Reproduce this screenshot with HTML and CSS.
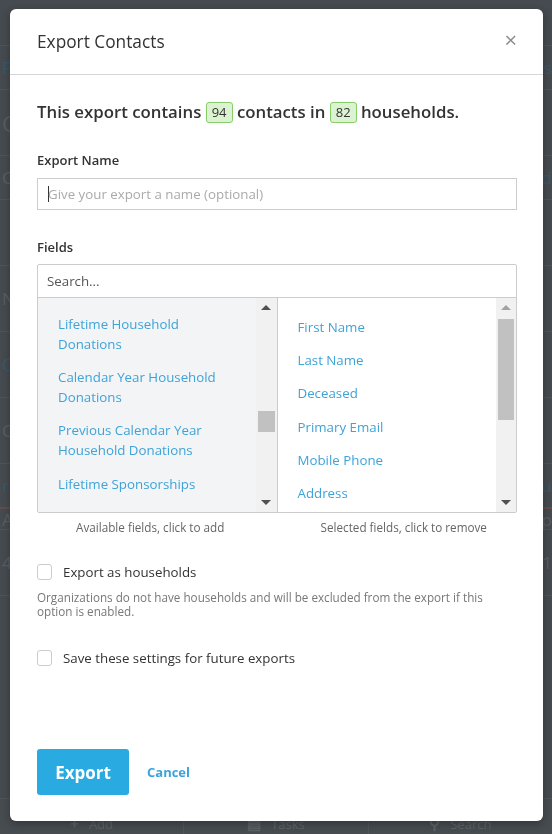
FILE: index.html
```html
<!DOCTYPE html>
<html lang="en">
	<head>
		<meta charset="UTF-8" />
		<meta name="viewport" content="width=device-width, initial-scale=1.0" />
		<title>Contacts</title>
		<link rel="stylesheet" href="styles.css">
	</head>
	<body>
		<!-- page underneath the modal -->
		<div class="page">
			<div class="page-top"></div>
			<div class="page-row"><span class="page-link">Filter contacts</span><span class="page-link right">Saved lists</span></div>
			<div class="page-row tall"><span class="page-title">Contacts</span></div>
			<div class="page-row"><span class="page-text">Contact</span><span class="page-link right">Updated</span></div>
			<div class="page-row tall"></div>
			<div class="page-row tall"><span class="page-text">Name</span></div>
			<div class="page-row tall"><span class="page-link">Organization</span></div>
			<div class="page-row tall"><span class="page-text">CSV</span></div>
			<div class="page-row"><span class="page-link">re</span><span class="page-link right">You</span></div>
			<div class="page-row warn"><span class="page-text">Add D</span><span class="page-text right">Map</span></div>
			<div class="page-row tall"><span class="page-text">404-</span><span class="page-text right">na 31</span></div>
			<div class="page-nav">
				<div class="nav-item"><span class="nav-icon">+</span>Add</div>
				<div class="nav-item"><span class="nav-icon">&#9636;</span>Tasks</div>
				<div class="nav-item"><span class="nav-icon">&#9906;</span>Search</div>
			</div>
		</div>

		<div class="backdrop">
			<div class="modal">
				<div class="modal-header">
					<h4 class="modal-title">Export Contacts</h4>
					<span class="modal-close">&times;</span>
				</div>
				<div class="modal-body">
					<p class="summary">This export contains <span class="badge">94</span> contacts in <span class="badge">82</span> households.</p>

					<label class="field-label">Export Name</label>
					<div class="text-input"><span class="caret"></span><span class="placeholder">Give your export a name (optional)</span></div>

					<label class="field-label fields-label">Fields</label>
					<div class="picker">
						<div class="picker-search">Search...</div>
						<div class="picker-lists">
							<div class="picker-pane available">
								<ul class="picker-list">
									<li>Lifetime Household Donations</li>
									<li>Calendar Year Household Donations</li>
									<li>Previous Calendar Year Household Donations</li>
									<li>Lifetime Sponsorships</li>
								</ul>
								<div class="scrollbar">
									<span class="arrow up"></span>
									<div class="track"><div class="thumb" style="margin-top: 94px; height: 21px;"></div></div>
									<span class="arrow down"></span>
								</div>
							</div>
							<div class="picker-pane selected">
								<ul class="picker-list">
									<li>First Name</li>
									<li>Last Name</li>
									<li>Deceased</li>
									<li>Primary Email</li>
									<li>Mobile Phone</li>
									<li>Address</li>
								</ul>
								<div class="scrollbar">
									<span class="arrow up light"></span>
									<div class="track"><div class="thumb" style="margin-top: 2px; height: 101px;"></div></div>
									<span class="arrow down"></span>
								</div>
							</div>
						</div>
					</div>
					<div class="picker-captions">
						<span>Available fields, click to add</span>
						<span>Selected fields, click to remove</span>
					</div>

					<div class="check-row households">
						<span class="checkbox"></span>
						<span class="check-label">Export as households</span>
					</div>
					<p class="help-text">Organizations do not have households and will be excluded from the export if this option is enabled.</p>

					<div class="check-row save">
						<span class="checkbox"></span>
						<span class="check-label">Save these settings for future exports</span>
					</div>
				</div>
				<div class="modal-footer">
					<button class="btn-export">Export</button>
					<a class="btn-cancel">Cancel</a>
				</div>
			</div>
		</div>
	</body>
</html>
```

FILE: styles.css
```css
* {
	padding: 0;
	margin: 0;
	box-sizing: border-box;
}
html,
body {
	height: 100%;
}
body {
	font-family: "Open Sans", "Noto Sans", sans-serif;
	color: #333;
	background-color: #4b5056;
	overflow: hidden;
}

/* dimmed page behind the dialog */
.page {
	height: 100%;
	display: flex;
	flex-direction: column;
	font-size: 17px;
}
.page-top {
	height: 46px;
	border-bottom: 1px solid #575c62;
}
.page-row {
	height: 44px;
	display: flex;
	align-items: center;
	justify-content: space-between;
	padding: 0 0 0 2px;
	border-bottom: 1px solid #565b61;
	white-space: nowrap;
}
.page-row.tall {
	height: 66px;
}
.page-row.warn {
	height: 22px;
	border-top: 1px solid #6b5552;
	border-bottom: 1px solid #6b5552;
}
.page-title {
	font-size: 22px;
	color: #60656a;
}
.page-link {
	color: #3e5f78;
}
.page-text {
	color: #62676c;
}
.page-nav {
	margin-top: auto;
	height: 36px;
	display: flex;
	border-top: 1px solid #575c62;
	background-color: #4d5258;
}
.nav-item {
	flex: 1;
	display: flex;
	align-items: flex-end;
	justify-content: center;
	gap: 10px;
	padding-bottom: 1px;
	font-size: 13px;
	color: #676c71;
	border-left: 1px solid #575c62;
}
.nav-item:first-child {
	border-left: none;
}
.nav-icon {
	font-size: 15px;
	font-weight: 700;
}

/* dialog */
.backdrop {
	position: fixed;
	inset: 0;
	padding: 9px 9px 13px 10px;
	display: flex;
	background-color: rgba(40, 44, 48, 0.15);
}
.modal {
	flex: 1;
	display: flex;
	flex-direction: column;
	background-color: #fff;
	border-radius: 6px;
	box-shadow: 0 3px 9px rgba(0, 0, 0, 0.3);
}
.modal-header {
	height: 66px;
	display: flex;
	align-items: center;
	justify-content: space-between;
	padding: 0 27px;
	border-bottom: 1px solid #d6d6d6;
}
.modal-title {
	font-size: 17.3px;
	font-weight: 400;
	color: #333;
}
.modal-close {
	font-size: 22px;
	line-height: 1;
	color: #8c8c8c;
	margin-top: -6px;
	margin-right: -1px;
}
.modal-body {
	padding: 25px 26px 0 27px;
}
.summary {
	font-size: 16.8px;
	font-weight: 600;
	line-height: 24px;
	color: #333;
}
.badge {
	display: inline-block;
	height: 21px;
	line-height: 19px;
	padding: 0 5px;
	font-size: 13px;
	font-weight: 400;
	color: #333;
	background-color: #dcf3d1;
	border: 1px solid #88cd6c;
	border-radius: 3px;
	vertical-align: 1px;
}
.field-label {
	display: block;
	margin-top: 27px;
	font-size: 13px;
	font-weight: 600;
	line-height: 18px;
	color: #333;
}
.text-input {
	margin-top: 9px;
	height: 32px;
	display: flex;
	align-items: center;
	padding-left: 10px;
	border: 1px solid #ccc;
	font-size: 13.3px;
}
.caret {
	width: 1px;
	height: 16px;
	background-color: #333;
}
.placeholder {
	color: #aaa;
	margin-left: -1px;
}
.fields-label {
	margin-top: 28px;
}

/* two-pane field picker */
.picker {
	margin-top: 8px;
	border: 1px solid #ccc;
	border-radius: 2px;
}
.picker-search {
	height: 33px;
	display: flex;
	align-items: center;
	padding-left: 9px;
	font-size: 13.3px;
	color: #555;
	border-bottom: 1px solid #ccc;
}
.picker-lists {
	height: 214px;
	display: flex;
}
.picker-pane {
	flex: 1;
	display: flex;
	overflow: hidden;
}
.picker-pane.available {
	background-color: #f3f4f6;
	border-right: 1px solid #ccc;
}
.picker-list {
	flex: 1;
	list-style: none;
	padding: 10px 0 0 20px;
	font-size: 13.3px;
	line-height: 20px;
	color: #3ea3d8;
}
.picker-pane.selected .picker-list {
	padding-top: 13px;
}
.picker-list li {
	padding: 6px 30px 7.2px 0;
}
.scrollbar {
	width: 20px;
	display: flex;
	flex-direction: column;
	align-items: center;
	background-color: #f1f1f1;
}
.available .scrollbar {
	width: 21px;
}
.track {
	flex: 1;
	width: 100%;
	padding: 0 2px;
}
.thumb {
	background-color: #c1c1c1;
}
.arrow {
	width: 0;
	height: 0;
	margin: 7px 0;
	border-left: 5px solid transparent;
	border-right: 5px solid transparent;
}
.arrow.up {
	border-bottom: 5px solid #505050;
}
.arrow.up.light {
	border-bottom-color: #a3a3a3;
}
.arrow.down {
	border-top: 5px solid #505050;
}
.picker-captions {
	display: flex;
	gap: 27px;
	margin-top: 6px;
	font-size: 11.7px;
	line-height: 16px;
	color: #666;
}
.picker-captions span {
	flex: 1;
	text-align: center;
}

.check-row {
	display: flex;
	align-items: center;
	gap: 11px;
	height: 20px;
	font-size: 13.3px;
}
.check-row.households {
	margin-top: 27px;
}
.check-row.save {
	margin-top: 30px;
}
.checkbox {
	width: 15px;
	height: 16px;
	border: 1px solid #ccc;
	border-radius: 3px;
}
.check-label {
	color: #333;
}
.help-text {
	margin-top: 8px;
	font-size: 11.7px;
	line-height: 14px;
	color: #777;
	padding-right: 20px;
}

.modal-footer {
	margin-top: auto;
	display: flex;
	align-items: center;
	gap: 18px;
	padding: 0 27px 26px;
}
.btn-export {
	width: 92px;
	height: 46px;
	border: none;
	border-radius: 3px;
	background-color: #29abe2;
	color: #fff;
	font-family: inherit;
	font-size: 17px;
	font-weight: 700;
}
.btn-cancel {
	font-size: 13px;
	font-weight: 700;
	color: #3ca3da;
}
```
